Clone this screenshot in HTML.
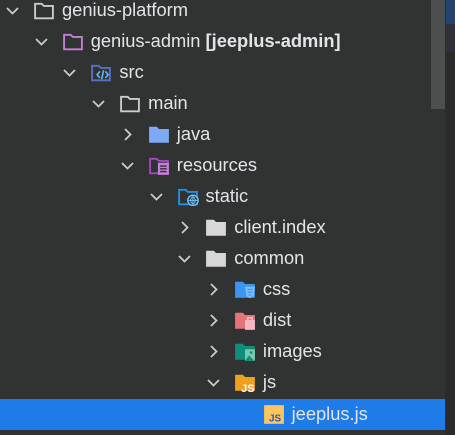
<!DOCTYPE html>
<html><head><style>
body{margin:0;width:455px;height:435px;background:#2b2b2b;overflow:hidden;font-family:"Liberation Sans",sans-serif;position:relative}
#main{position:absolute;left:0;top:0;width:445px;height:435px;background:#313332}
.r{position:absolute;left:0;width:445px;height:31px}
.sel{background:#1e7be8}
.t{position:absolute;top:4px;font-size:18.3px;color:#e2e4e8;line-height:22px;white-space:nowrap}
.c{position:absolute;top:8px;width:15px;height:15px;display:block}
.i{position:absolute;top:6px;width:22px;height:19px;display:block}
</style></head><body>
<div id="main"></div>
<div style="position:absolute;left:431px;top:0;width:14px;height:109px;background:#4d4f4e"></div>
<div style="position:absolute;left:446px;top:0;width:9px;height:24px;background:#24446e"></div>
<div style="position:absolute;left:446px;top:24px;width:9px;height:28px;background:#2f3038"></div>
<div id="tree"></div>
<script>
var D='<path d="M2 5l5.5 5.5L13 5" stroke="#c9cbcf" stroke-width="1.8" fill="none"/>';
var R='<path d="M5 2l5.5 5.5L5 13" stroke="#c9cbcf" stroke-width="1.8" fill="none"/>';
function fo(c){return '<path d="M1.9 2.4h6l2 2h8.2v11.2H1.9z" fill="none" stroke="'+c+'" stroke-width="1.7"/>';}
function ff(c){return '<path d="M1 1.5h7l2 2h9V16H1z" fill="'+c+'"/>';}
var icons={
o:fo('#c9cbcf'),
p:fo('#c37fd8'),
s:fo('#5a6fc7')+'<path d="M9 7.5l-2.5 3 2.5 3M14 7.5l2.5 3-2.5 3M12.3 6.5l-1.6 8" stroke="#5fb6f2" stroke-width="1.5" fill="none"/>',
j:ff('#7fa8f5'),
re:fo('#a248c2')+'<rect x="9" y="6" width="10" height="11" fill="#c37fd8"/><path d="M11 9h6M11 11.5h6M11 14h6" stroke="#3a2a40" stroke-width="1.2"/>',
st:fo('#2390de')+'<circle cx="14.5" cy="12" r="4.7" fill="#313332" stroke="#6fc0f5" stroke-width="1.3"/><path d="M10 12h9M14.5 7.5v9M12.5 12c0-4 4-4 4 0s-4 4-4 0" stroke="#6fc0f5" stroke-width="0.9" fill="none"/>',
g:ff('#d7d7d7'),
cs:ff('#3d95f2')+'<path d="M10 6h9l-1.3 8.5-3.2 2-3.2-2z" fill="#7fc0ff"/><path d="M12 8.5h5M12.5 11h4.5M13 13.5h3" stroke="#3d95f2" stroke-width="1.1"/>',
di:ff('#e3747a')+'<rect x="10" y="8" width="9" height="9" fill="#f6b8c0"/><path d="M12.5 8V6h4v2" stroke="#f6b8c0" stroke-width="1.4" fill="none"/>',
im:ff('#0f8f7a')+'<rect x="10" y="6.5" width="9" height="10.5" fill="#78c8b4"/><circle cx="15.5" cy="9.5" r="1.2" fill="#0f8f7a"/><path d="M10 17l3.5-5 5 5z" fill="#0f8f7a"/>',
js:ff('#f0a020')+'<text x="6.5" y="17" font-family="Liberation Sans" font-weight="bold" font-size="10" fill="#fff">JS</text>',
jf:'<rect x="1" y="0" width="18" height="17" fill="#fbc561"/><text x="5.5" y="15" font-family="Liberation Sans" font-weight="bold" font-size="9" fill="#2a5bb0">JS</text>'
};
var rows=[[0,'d','o','genius-platform'],[1,'d','p','genius-admin <b>[jeeplus-admin]</b>'],[2,'d','s','src'],[3,'d','o','main'],[4,'r','j','java'],[4,'d','re','resources'],[5,'d','st','static'],[6,'r','g','client.index'],[6,'d','g','common'],[7,'r','cs','css'],[7,'r','di','dist'],[7,'r','im','images'],[7,'d','js','js'],[8,'','jf','jeeplus.js']];
var h='';
rows.forEach(function(r,i){
 var L=r[0]*28.7,top=-5.5+31*i+(i==13?1.5:0);
 h+='<div class="r'+(i==13?' sel':'')+'" style="top:'+top+'px">';
 if(r[1])h+='<svg class="c" style="left:'+(5+L)+'px" viewBox="0 0 15 15">'+(r[1]=='d'?D:R)+'</svg>';
 h+='<svg class="i" style="left:'+(33+L)+'px" viewBox="0 0 20 17">'+icons[r[2]]+'</svg>';
 h+='<div class="t" style="left:'+(62+L)+'px">'+r[3]+'</div></div>';
});
document.getElementById('tree').innerHTML=h;
</script>
</body></html>
